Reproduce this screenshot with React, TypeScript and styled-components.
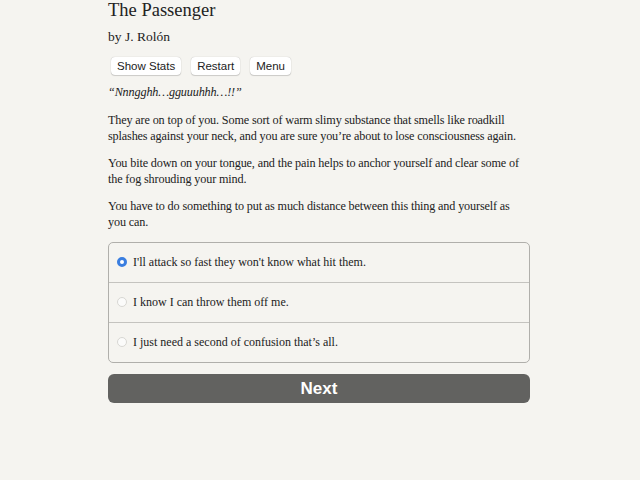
import React, { useState } from 'react'
import styled, { createGlobalStyle } from 'styled-components'

const Global = createGlobalStyle`
  html, body {
    margin: 0;
    padding: 0;
    background: #f5f4f0;
  }
  body {
    font-family: "Liberation Serif", "DejaVu Serif", serif;
    color: #222;
  }
`

const Page = styled.div`
  width: 422px;
  margin-left: 108px;
`

const Title = styled.h1`
  margin: 0;
  font-size: 18.5px;
  font-weight: normal;
  line-height: 20px;
`

const Author = styled.h2`
  margin: 7px 0 0;
  font-size: 13.5px;
  font-weight: normal;
  line-height: 20px;
`

const Toolbar = styled.div`
  display: flex;
  gap: 10px;
  margin: 10px 0 0 3px;
`

const ToolButton = styled.button`
  font-family: "Liberation Sans", Arial, sans-serif;
  font-size: 11.5px;
  color: #222;
  background: #fff;
  border: none;
  border-radius: 4px;
  padding: 0 6px;
  height: 18px;
  box-shadow: 0 0 1px rgba(0, 0, 0, 0.3), 0 1px 1px rgba(0, 0, 0, 0.15);
`

const Story = styled.div`
  display: flex;
  flex-direction: column;
  gap: 11px;
  margin-top: 9px;
`

const Text = styled.p<{ $italic?: boolean }>`
  margin: 0;
  font-size: 12.2px;
  letter-spacing: -0.15px;
  line-height: 16px;
  font-style: ${(p) => (p.$italic ? 'italic' : 'normal')};
`

const Quote = styled(Text)`
  margin-bottom: 1px;
`

const Choices = styled.div`
  margin-top: 12px;
  border: 1px solid #b0afab;
  border-radius: 5px;
  overflow: hidden;
`

const Choice = styled.label`
  display: flex;
  align-items: center;
  gap: 6px;
  height: 39px;
  padding: 0 7px 1px 8px;
  box-sizing: border-box;
  font-size: 12px;
  cursor: pointer;
  & + & {
    border-top: 1px solid #c4c3bf;
    height: 40px;
  }
`

const Radio = styled.span<{ $on: boolean }>`
  width: 10px;
  height: 10px;
  border-radius: 50%;
  box-sizing: border-box;
  background: ${(p) => (p.$on ? '#fff' : '#fbfbfa')};
  border: ${(p) => (p.$on ? '3px solid #3a7ee0' : '1px solid #d8d7d3')};
`

const Next = styled.button`
  display: block;
  width: 100%;
  margin-top: 11px;
  height: 29px;
  border: none;
  border-radius: 6px;
  background: #626260;
  color: #fff;
  font-family: "Liberation Sans", Arial, sans-serif;
  font-weight: bold;
  font-size: 17px;
`

const options = [
  "I'll attack so fast they won't know what hit them.",
  'I know I can throw them off me.',
  'I just need a second of confusion that’s all.',
]

export default function App() {
  const [picked, setPicked] = useState(0)
  return (
    <Page>
      <Global />
      <Title>The Passenger</Title>
      <Author>by J. Rolón</Author>
      <Toolbar>
        <ToolButton>Show Stats</ToolButton>
        <ToolButton>Restart</ToolButton>
        <ToolButton>Menu</ToolButton>
      </Toolbar>
      <Story>
        <Quote $italic>“Nnngghh…gguuuhhh…!!”</Quote>
        <Text>
          They are on top of you. Some sort of warm slimy substance that smells like roadkill
          splashes against your neck, and you are sure you’re about to lose consciousness again.
        </Text>
        <Text>
          You bite down on your tongue, and the pain helps to anchor yourself and clear some of
          the fog shrouding your mind.
        </Text>
        <Text>
          You have to do something to put as much distance between this thing and yourself as
          you can.
        </Text>
      </Story>
      <Choices>
        {options.map((o, i) => (
          <Choice key={i} onClick={() => setPicked(i)}>
            <Radio $on={picked === i} />
            {o}
          </Choice>
        ))}
      </Choices>
      <Next>Next</Next>
    </Page>
  )
}
